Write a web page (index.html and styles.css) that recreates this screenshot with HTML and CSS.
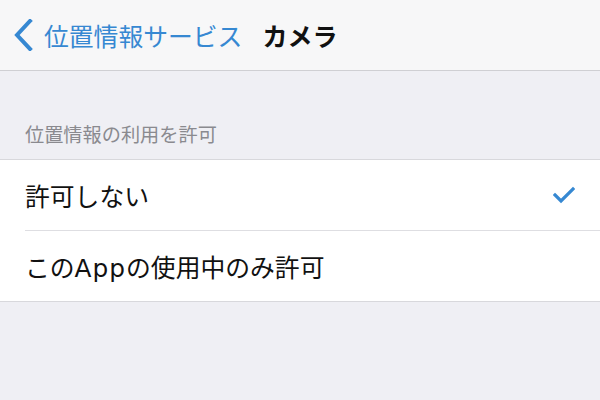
FILE: index.html
```html
<!DOCTYPE html>
<html lang="ja">
<head>
<meta charset="utf-8">
<link rel="stylesheet" href="styles.css">
</head>
<body>
<header class="nav">
  <svg class="chevron" width="21" height="32" viewBox="0 0 21 32"><path d="M17 2 L4 16 L17 30" fill="none" stroke="#3688d2" stroke-width="4" stroke-linecap="square"/></svg>
  <span class="back-label">位置情報サービス</span>
  <span class="title">カメラ</span>
</header>
<div class="section-header">位置情報の利用を許可</div>
<ul class="list">
  <li class="row"><span>許可しない</span><svg class="check" width="22" height="18" viewBox="0 0 22 18"><path d="M2 9 L8 15 L20 3" fill="none" stroke="#3688d2" stroke-width="3.2" stroke-linecap="square"/></svg></li>
  <li class="row"><span>この<span class="latin">App</span>の使用中のみ許可</span></li>
</ul>
</body>
</html>
```
FILE: styles.css
```css
html, body { margin: 0; padding: 0; }
body {
  background: #efeff4;
  font-family: "Noto Sans CJK JP", "Noto Sans", sans-serif;
  width: 600px; height: 400px; overflow: hidden;
}
.nav {
  height: 70px;
  background: #f7f7f8;
  border-bottom: 1px solid #cfcfd3;
  display: flex;
  align-items: center;
  padding-left: 13px;
  box-sizing: content-box;
}
.chevron { display: block; }
.back-label {
  color: #3688d2;
  font-size: 24.8px;
  margin-left: 10px;
  line-height: 1;
}
.title {
  color: #111;
  font-weight: bold;
  font-size: 25px;
  margin-left: 20px;
  line-height: 1;
}
.section-header {
  padding: 51px 25px 13px;
  height: 24px;
  line-height: 24px;
  font-size: 19.2px;
  color: #8a8a8f;
}
.list {
  list-style: none;
  margin: 0;
  padding: 0 0 0 25px;
  background: #fff;
  border-top: 1px solid #d8d8dc;
  border-bottom: 1px solid #d8d8dc;
}
.row {
  height: 70px;
  display: flex;
  align-items: center;
  justify-content: space-between;
  padding-right: 25px;
  font-size: 24.8px;
  color: #111;
}
.row + .row { border-top: 1px solid #dedee2; }
.latin { font-family: "DejaVu Sans", sans-serif; letter-spacing: 1px; }
.check { display: block; }
```
